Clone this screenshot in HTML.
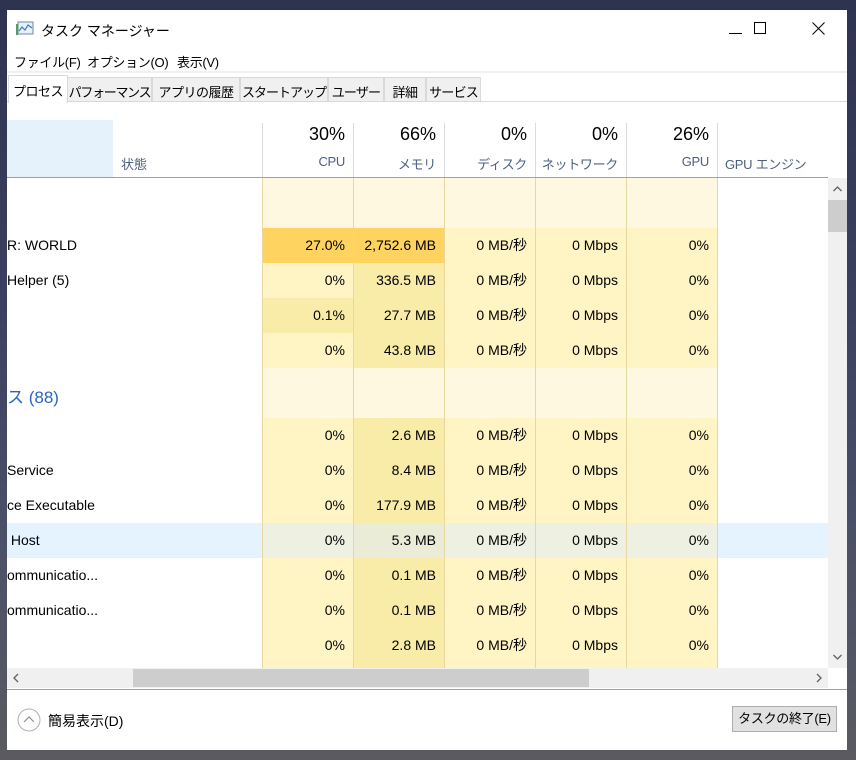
<!DOCTYPE html>
<html><head><meta charset="utf-8"><style>
*{margin:0;padding:0;box-sizing:border-box}
body{width:856px;height:760px;overflow:hidden;background:linear-gradient(180deg,#2e3350 0%,#3b4060 40%,#4a5068 70%,#5a5a60 100%);font-family:"Liberation Sans","Noto Sans CJK JP",sans-serif;position:relative}
.win{position:absolute;left:7px;top:10px;width:840px;height:740px;background:#fff;overflow:hidden}
.a{position:absolute;white-space:nowrap}
.tab{position:absolute;top:67px;height:25px;background:#f0f0f0;border:1px solid #d9d9d9;font-size:13px;letter-spacing:-0.5px;padding:4px 0 0 0;text-align:center;color:#000;white-space:nowrap;overflow:hidden}
.cell{position:absolute;height:35px;font-size:14px;text-align:right;padding-right:8px;line-height:35px;color:#000;white-space:nowrap}
.vl{position:absolute;width:1px;background:#e8d7a0}
.hv{position:absolute;top:113px;height:55px;width:1px;background:#dadada}
.hp{position:absolute;top:114px;font-size:18px;text-align:right;width:83px}
.hl{position:absolute;top:144px;font-size:13px;letter-spacing:-0.3px;text-align:right;width:83px;color:#4d6082;white-space:nowrap}
.nm{position:absolute;left:0;font-size:14px;line-height:35px;height:35px;white-space:nowrap}
.mn{position:absolute;top:42px;font-size:13px;letter-spacing:-0.3px;white-space:nowrap}
</style></head><body>
<div class="win">
 <svg class="a" style="left:9px;top:11px" width="18" height="16" viewBox="0 0 18 16"><rect x="2" y="1" width="15" height="12" fill="#e8f0f8" stroke="#6a8aa8"/><polyline points="3,10 6,6 9,9 12,4 16,7" fill="none" stroke="#3a7ac8" stroke-width="1.2"/><rect x="0" y="3" width="2" height="11" fill="#5a9a5a"/></svg>
 <div class="a" style="left:34px;top:11px;font-size:14px">タスク マネージャー</div>
 <div class="a" style="left:722px;top:23px;width:13px;height:1px;background:#000"></div>
 <div class="a" style="left:747px;top:12px;width:12px;height:12px;border:1px solid #000"></div>
 <svg class="a" style="left:805px;top:12px" width="13" height="13"><path d="M0.5 0.5L12.5 12.5M12.5 0.5L0.5 12.5" stroke="#000" stroke-width="1"/></svg>
 <div class="mn" style="left:7px">ファイル(F)</div>
 <div class="mn" style="left:80px">オプション(O)</div>
 <div class="mn" style="left:170px">表示(V)</div>
 <div class="a" style="left:0;top:61px;width:840px;height:2px;background:#f0f0f0"></div>
 <div class="a" style="left:0;top:91px;width:840px;height:1px;background:#d9d9d9"></div>
 <div class="tab" style="left:60px;width:85px;letter-spacing:-1.3px">パフォーマンス</div>
 <div class="tab" style="left:145px;width:88px">アプリの履歴</div>
 <div class="tab" style="left:233px;width:88px;letter-spacing:-1px">スタートアップ</div>
 <div class="tab" style="left:321px;width:56px;letter-spacing:-0.8px">ユーザー</div>
 <div class="tab" style="left:377px;width:42px">詳細</div>
 <div class="tab" style="left:419px;width:55px;letter-spacing:-0.8px">サービス</div>
 <div class="tab" style="left:1px;top:65px;height:28px;width:60px;background:#fff;border-bottom:none;padding-top:5px">プロセス</div>
 <div class="a" style="left:0;top:110px;width:106px;height:58px;background:#e5f1fb"></div>
 <div class="a" style="left:114px;top:144px;font-size:13px;color:#4d6082">状態</div>
 <div class="hv" style="left:255px"></div><div class="hv" style="left:346px"></div><div class="hv" style="left:437px"></div><div class="hv" style="left:528px"></div><div class="hv" style="left:619px"></div><div class="hv" style="left:710px"></div>
 <div class="hp" style="left:255px">30%</div><div class="hl" style="left:255px">CPU</div>
 <div class="hp" style="left:346px">66%</div><div class="hl" style="left:346px">メモリ</div>
 <div class="hp" style="left:437px">0%</div><div class="hl" style="left:437px">ディスク</div>
 <div class="hp" style="left:528px">0%</div><div class="hl" style="left:528px">ネットワーク</div>
 <div class="hp" style="left:619px">26%</div><div class="hl" style="left:619px">GPU</div>
 <div class="a" style="left:718px;top:144px;font-size:13px;color:#4d6082;letter-spacing:-0.3px">GPU エンジン</div>
 <div class="a" style="left:0;top:167px;width:821px;height:1px;background:#a0a0a0"></div>
 <div class="a" style="left:0;top:168px;width:821px;height:490px;overflow:hidden">
  <div class="a" style="left:255px;top:0;width:455px;height:50px;background:#fff8e0"></div>
  <div class="a" style="left:255px;top:190px;width:455px;height:50px;background:#fff8e0"></div>
  <div class="a" style="left:0;top:345px;width:821px;height:35px;background:#e5f3ff"></div>
  <div class="nm" style="top:50px">R: WORLD</div>
  <div class="nm" style="top:85px">Helper (5)</div>
  <div class="nm" style="top:202px;font-size:17px;color:#2a64c8">ス (88)</div>
  <div class="nm" style="top:275px">Service</div>
  <div class="nm" style="top:310px">ce Executable</div>
  <div class="nm" style="top:345px">&nbsp;Host</div>
  <div class="nm" style="top:380px">ommunicatio...</div>
  <div class="nm" style="top:415px">ommunicatio...</div>
  <div class="cell" style="left:255px;top:50px;width:91px;background:#ffd35f">27.0%</div>
  <div class="cell" style="left:346px;top:50px;width:91px;background:#ffd35f">2,752.6 MB</div>
  <div class="cell" style="left:255px;top:85px;width:91px;background:#fff4c4">0%</div>
  <div class="cell" style="left:346px;top:85px;width:91px;background:#f9eca8">336.5 MB</div>
  <div class="cell" style="left:255px;top:120px;width:91px;background:#f9eca8">0.1%</div>
  <div class="cell" style="left:346px;top:120px;width:91px;background:#f9eca8">27.7 MB</div>
  <div class="cell" style="left:255px;top:155px;width:91px;background:#fff4c4">0%</div>
  <div class="cell" style="left:346px;top:155px;width:91px;background:#f9eca8">43.8 MB</div>
  <div class="cell" style="left:255px;top:240px;width:91px;background:#fff4c4">0%</div>
  <div class="cell" style="left:346px;top:240px;width:91px;background:#f9eca8">2.6 MB</div>
  <div class="cell" style="left:255px;top:275px;width:91px;background:#fff4c4">0%</div>
  <div class="cell" style="left:346px;top:275px;width:91px;background:#f9eca8">8.4 MB</div>
  <div class="cell" style="left:255px;top:310px;width:91px;background:#fff4c4">0%</div>
  <div class="cell" style="left:346px;top:310px;width:91px;background:#f9eca8">177.9 MB</div>
  <div class="cell" style="left:255px;top:345px;width:91px;background:#eef0e2">0%</div>
  <div class="cell" style="left:346px;top:345px;width:91px;background:#ebecd8">5.3 MB</div>
  <div class="cell" style="left:255px;top:380px;width:91px;background:#fff4c4">0%</div>
  <div class="cell" style="left:346px;top:380px;width:91px;background:#f9eca8">0.1 MB</div>
  <div class="cell" style="left:255px;top:415px;width:91px;background:#fff4c4">0%</div>
  <div class="cell" style="left:346px;top:415px;width:91px;background:#f9eca8">0.1 MB</div>
  <div class="cell" style="left:255px;top:450px;width:91px;height:40px;line-height:35px;background:#fff4c4">0%</div>
  <div class="cell" style="left:346px;top:450px;width:91px;height:40px;line-height:35px;background:#f9eca8">2.8 MB</div>
  <div class="a" style="left:437px;top:50px;width:273px;height:140px;background:#fff4c4"></div>
  <div class="a" style="left:437px;top:240px;width:273px;height:250px;background:#fff4c4"></div>
  <div class="a" style="left:437px;top:345px;width:273px;height:35px;background:#eef0e2"></div>
  <div class="vl" style="left:255px;top:0;height:490px"></div><div class="vl" style="left:346px;top:0;height:490px"></div><div class="vl" style="left:437px;top:0;height:490px"></div><div class="vl" style="left:528px;top:0;height:490px"></div><div class="vl" style="left:619px;top:0;height:490px"></div><div class="vl" style="left:710px;top:0;height:490px"></div>
 </div>
 <div id="c" class="a" style="left:437px;top:218px;width:273px;height:440px;overflow:hidden;font-size:14px"></div>
 <div class="a" style="left:821px;top:168px;width:19px;height:490px;background:#f0f0f0"></div>
 <div class="a" style="left:821px;top:190px;width:19px;height:32px;background:#cdcdcd"></div>
 <svg class="a" style="left:821px;top:170px" width="19" height="18"><path d="M5.5 11L9.5 7L13.5 11" fill="none" stroke="#606060" stroke-width="1.3"/></svg>
 <svg class="a" style="left:821px;top:638px" width="19" height="18"><path d="M5.5 7L9.5 11L13.5 7" fill="none" stroke="#606060" stroke-width="1.3"/></svg>
 <div class="a" style="left:0;top:658px;width:821px;height:20px;background:#f0f0f0"></div>
 <div class="a" style="left:126px;top:659px;width:456px;height:18px;background:#cdcdcd"></div>
 <svg class="a" style="left:2px;top:659px" width="14" height="18"><path d="M9 5L5 9L9 13" fill="none" stroke="#606060" stroke-width="1.3"/></svg>
 <svg class="a" style="left:805px;top:659px" width="14" height="18"><path d="M5 5L9 9L5 13" fill="none" stroke="#606060" stroke-width="1.3"/></svg>
 <div class="a" style="left:0;top:679px;width:840px;height:1px;background:#a0a0a0"></div>
 <svg class="a" style="left:10px;top:698px" width="24" height="24"><circle cx="12" cy="12" r="11" fill="none" stroke="#b0b0b0"/><path d="M7 14L12 9L17 14" fill="none" stroke="#909090" stroke-width="1.2"/></svg>
 <div class="a" style="left:41px;top:701px;font-size:14px">簡易表示(D)</div>
 <div class="a" style="left:725px;top:696px;width:105px;height:26px;background:#e1e1e1;border:1px solid #adadad;font-size:13px;letter-spacing:-0.3px;text-align:center;line-height:24px">タスクの終了(E)</div>
</div>
<script>
var tops=[50,85,120,155,240,275,310,345,380,415,450];
var h='';tops.forEach(function(r){var t=r-50;
h+='<div class="cell" style="left:0;top:'+t+'px;width:91px">0 MB/秒</div><div class="cell" style="left:91px;top:'+t+'px;width:91px">0 Mbps</div><div class="cell" style="left:182px;top:'+t+'px;width:91px">0%</div>';});
document.getElementById('c').innerHTML=h;
</script>
</body></html>
